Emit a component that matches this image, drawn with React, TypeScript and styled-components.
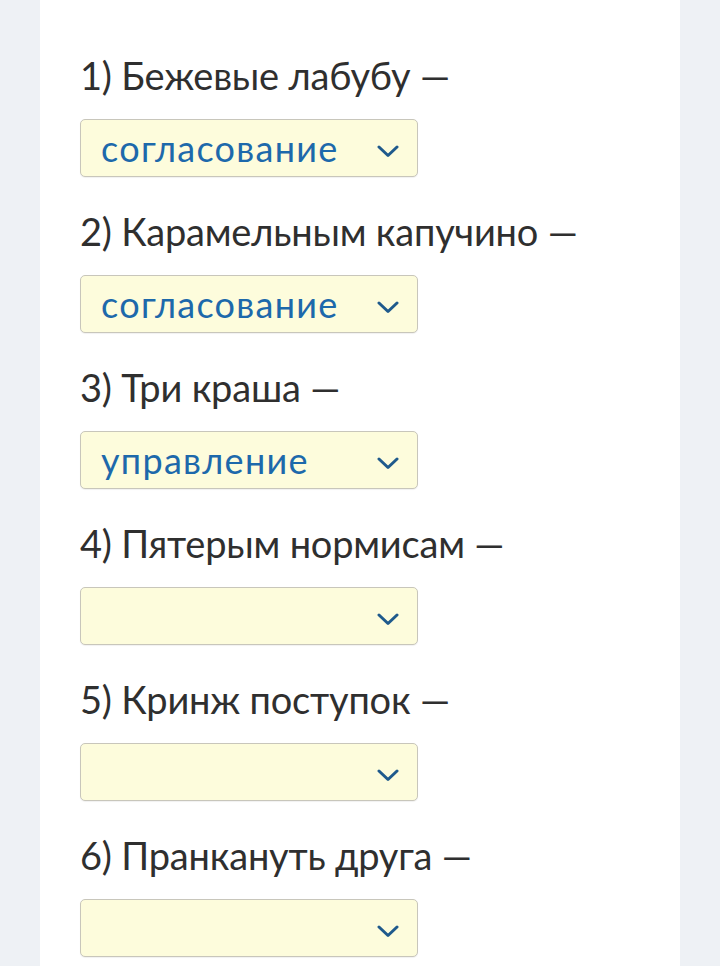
import React from "react";
import styled, { createGlobalStyle } from "styled-components";

const GlobalStyle = createGlobalStyle`
  html, body {
    margin: 0;
    padding: 0;
    background: #eef1f5;
  }
  body {
    font-family: Lato, "Noto Sans", "DejaVu Sans", sans-serif;
  }
`;

const Card = styled.main`
  box-sizing: border-box;
  width: 640px;
  min-height: 966px;
  margin: 0 40px;
  padding: 54px 40px 0;
  background: #ffffff;
  display: flex;
  flex-direction: column;
  gap: 33px;
`;

const Item = styled.div`
  display: flex;
  flex-direction: column;
  align-items: flex-start;
  gap: 23px;
`;

const Label = styled.div`
  font-size: 38px;
  line-height: 42px;
  letter-spacing: -0.2px;
  color: #2f2f2f;
  white-space: nowrap;
`;

const Select = styled.div`
  box-sizing: border-box;
  width: 338px;
  height: 58px;
  padding: 0 18px 0 20px;
  display: flex;
  align-items: center;
  justify-content: space-between;
  background: #fdfcdc;
  border: 1.5px solid #c8c6bb;
  border-radius: 5px;
  box-shadow: 0 1px 1px rgba(0, 0, 0, 0.06);
`;

const Value = styled.span`
  font-size: 36px;
  line-height: 40px;
  letter-spacing: 1.3px;
  color: #1d69ab;
`;

const Chevron = styled.svg`
  width: 22px;
  height: 13px;
  flex: none;
  margin-top: 6px;
`;

const items = [
  { label: "1) Бежевые лабубу —", value: "согласование" },
  { label: "2) Карамельным капучино —", value: "согласование" },
  { label: "3) Три краша —", value: "управление" },
  { label: "4) Пятерым нормисам —", value: "" },
  { label: "5) Кринж поступок —", value: "" },
  { label: "6) Пранкануть друга —", value: "" },
];

export default function App() {
  return (
    <>
      <GlobalStyle />
      <Card>
        {items.map((it) => (
          <Item key={it.label}>
            <Label>{it.label}</Label>
            <Select>
              <Value>{it.value}</Value>
              <Chevron viewBox="0 0 22 13" fill="none">
                <path
                  d="M2 2 L11 10.5 L20 2"
                  stroke="#1f5a8c"
                  strokeWidth="3"
                  strokeLinecap="round"
                  strokeLinejoin="round"
                />
              </Chevron>
            </Select>
          </Item>
        ))}
      </Card>
    </>
  );
}
